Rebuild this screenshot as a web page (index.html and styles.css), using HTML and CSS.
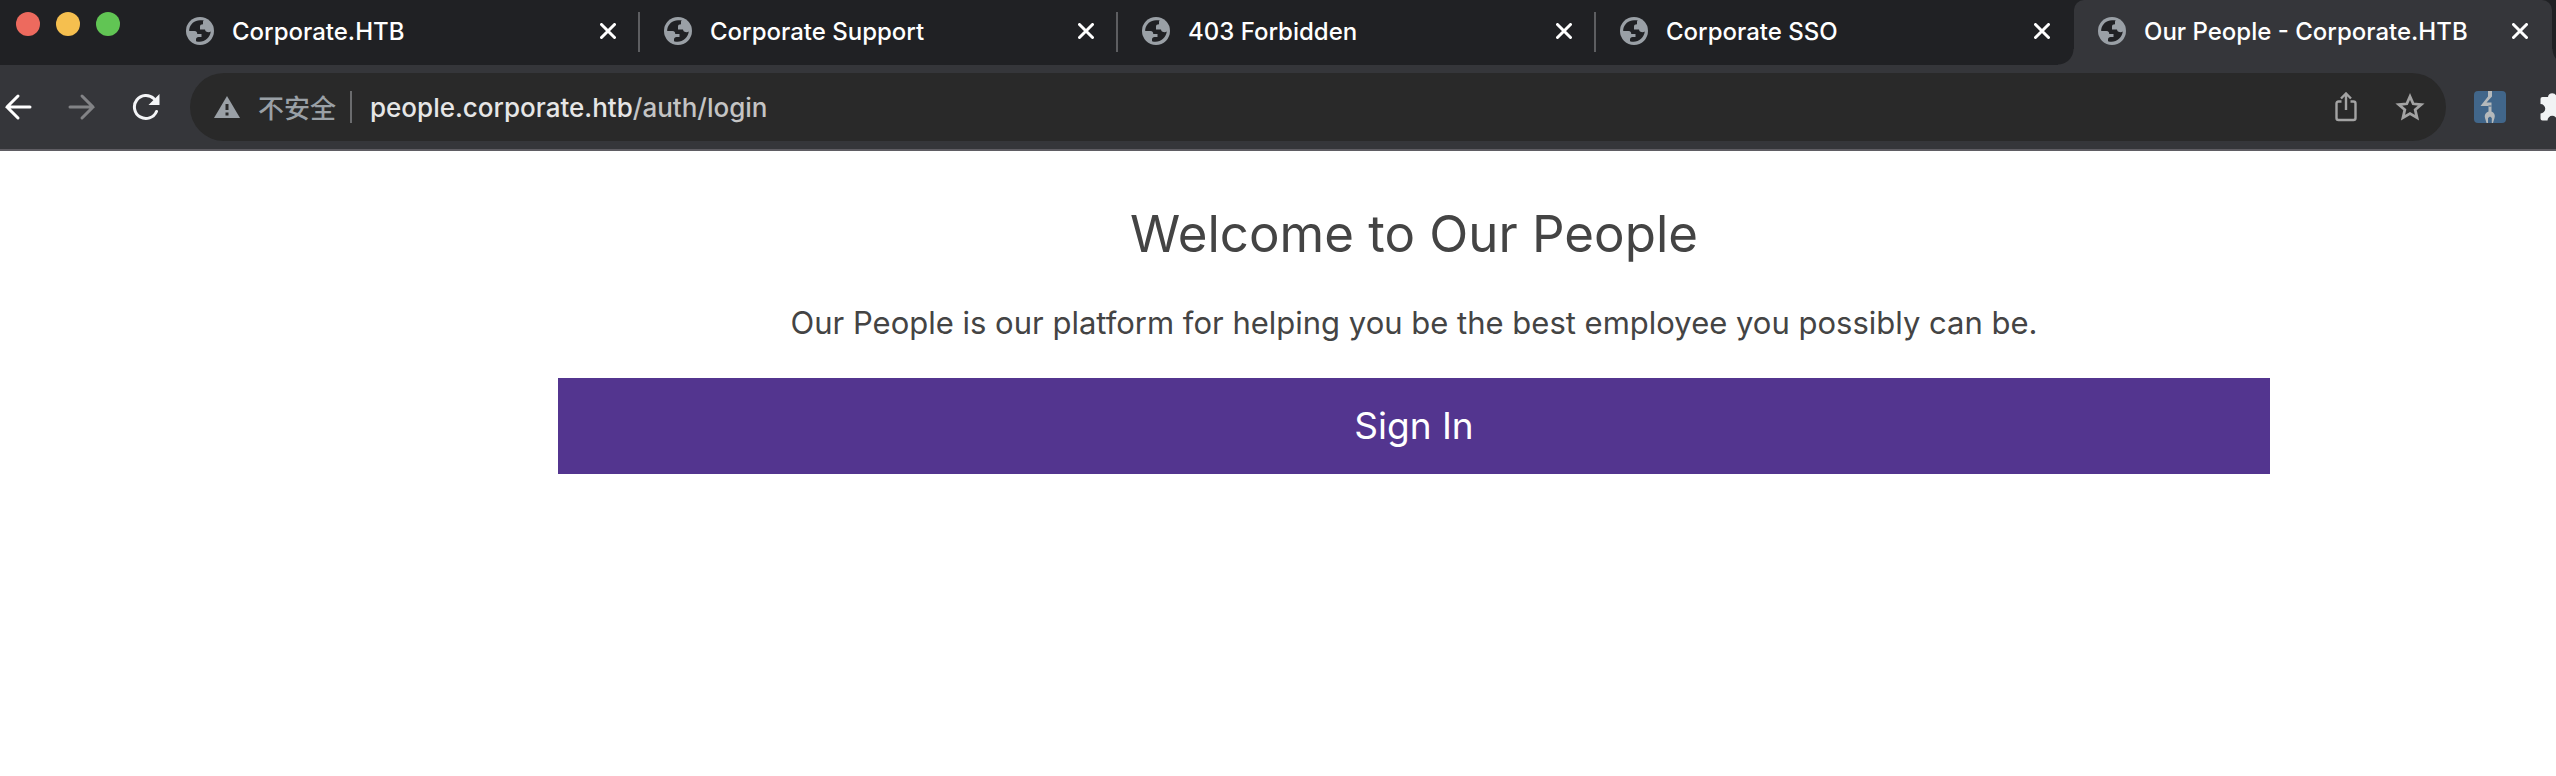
FILE: index.html
```html
<!DOCTYPE html>
<html lang="en">
<head>
<meta charset="utf-8">
<title>Our People - Corporate.HTB</title>
<link rel="stylesheet" href="styles.css">
</head>
<body>
<svg class="sprite" aria-hidden="true">
  <symbol id="globe" viewBox="0 0 28 28">
    <circle cx="14" cy="14" r="14" fill="#9aa0a6"/>
    <path class="sea" d="M14 3.2C8.500 3.300 4.200 7 3.200 12.500V14H8.500C10.500 14 11.500 15.500 11.200 17H15.500V20H12.500C11 20 10 21 10 22.500V24.200C17 26.500 24 21.500 24.800 14.500C23.500 15.600 21.500 15.400 20 14.500C19.300 13.800 19.300 13.500 19 12.500H14V9.500C14 8 15 7.500 17 7.300V5C17 4 17.500 3.700 17.800 3.500C16.500 3.200 15.300 3.100 14 3.200Z"/>
  </symbol>
  <symbol id="cross" viewBox="0 0 16 16">
    <path d="M1.500 1.500L14.500 14.500M14.500 1.500L1.500 14.500" fill="none" stroke="#fff" stroke-width="3" stroke-linecap="round"/>
  </symbol>
</svg>
<header class="browser">
  <div class="tabstrip">
    <div class="lights">
      <button class="light red" aria-label="Close window"></button>
      <button class="light yellow" aria-label="Minimize window"></button>
      <button class="light green" aria-label="Zoom window"></button>
    </div>
    <div class="tab"><svg class="globe"><use href="#globe"/></svg><span class="title">Corporate.HTB</span><button class="close" aria-label="Close Corporate.HTB"><svg><use href="#cross"/></svg></button></div>
    <div class="tab"><svg class="globe"><use href="#globe"/></svg><span class="title">Corporate Support</span><button class="close" aria-label="Close Corporate Support"><svg><use href="#cross"/></svg></button></div>
    <div class="tab"><svg class="globe"><use href="#globe"/></svg><span class="title">403 Forbidden</span><button class="close" aria-label="Close 403 Forbidden"><svg><use href="#cross"/></svg></button></div>
    <div class="tab last"><svg class="globe"><use href="#globe"/></svg><span class="title">Corporate SSO</span><button class="close" aria-label="Close Corporate SSO"><svg><use href="#cross"/></svg></button></div>
    <div class="tab active"><svg class="globe"><use href="#globe"/></svg><span class="title">Our People - Corporate.HTB</span><button class="close" aria-label="Close Our People"><svg><use href="#cross"/></svg></button></div>
  </div>
  <div class="toolbar">
    <nav class="nav">
      <button aria-label="Back"><svg viewBox="0 0 28 28"><path d="M26 14H3M14 3L3 14L14 25" fill="none" stroke="#fff" stroke-width="3" stroke-linecap="round"/></svg></button>
      <button aria-label="Forward"><svg viewBox="0 0 28 28"><path d="M2 14H25M14 3L25 14L14 25" fill="none" stroke="#828386" stroke-width="3" stroke-linecap="round"/></svg></button>
      <button aria-label="Reload"><svg viewBox="0 0 28 28"><path d="M24.500 18.500A11.500 11.500 0 1 1 22 5.800" fill="none" stroke="#f4f5f7" stroke-width="3" stroke-linecap="round"/><path d="M27.500 1V12H16.500Z" fill="#f4f5f7"/></svg></button>
    </nav>
    <div class="omnibox">
      <svg class="warn" viewBox="0 0 26 22"><path d="M13 0L26 22H0Z" fill="#9aa0a6"/><path d="M13 8V14M13 16.500V19.500" stroke="#292929" stroke-width="3"/></svg>
      <span class="insecure" lang="zh">不安全</span>
      <a class="url" href="#"><b>people.corporate.htb</b>/auth/login</a>
      <button class="share" aria-label="Share"><svg viewBox="0 0 22 30"><path d="M6.500 9.500H3.500Q1.500 9.500 1.500 11.500V26Q1.500 28 3.500 28H18.500Q20.500 28 20.500 26V11.500Q20.500 9.500 18.500 9.500H15.500M11 18V2M6 6.500L11 1.500L16 6.500" fill="none" stroke="#a3a3a3" stroke-width="2.400"/></svg></button>
      <button class="star" aria-label="Bookmark"><svg viewBox="0 0 30 28"><path d="M15 3.500L18.200 10.800L26.200 11.500L20.200 16.800L22 24.600L15 20.500L8 24.600L9.800 16.800L3.800 11.500L11.800 10.800Z" fill="none" stroke="#a3a3a3" stroke-width="2.800"/></svg></button>
    </div>
    <button class="ext" aria-label="Extension"><svg viewBox="0 0 32 32"><rect width="32" height="32" rx="4" fill="#41668a"/><path d="M14 0H18V5.500L12.500 11.500H17.500V20.500A5 5 0 0 1 20.500 27L19 32H17.800V27L16 25.500L14 27V32H12.500L11 27A5 5 0 0 1 14.500 20.500V15H6.500L14 5.500Z" fill="#b5b9bb"/><path d="M14.500 15H17.500" stroke="#41668a"/></svg></button>
    <button class="puzzle" aria-label="Extensions"><svg viewBox="0 0 32 30"><path d="M2.500 5H8A4.300 4.300 0 0 1 16.500 5H22Q24 5 24 7V12.500A4.300 4.300 0 0 1 24 21V26.500Q24 28.500 22 28.500H17A4.600 4.600 0 0 0 7.500 28.500H2.500Q.5 28.500 .5 26.500V21.500A4.600 4.600 0 0 0 .5 12V7Q.5 5 2.500 5Z" fill="#f1f3f4"/></svg></button>
  </div>
</header>
<main class="page">
  <h1>Welcome to Our People</h1>
  <p>Our People is our platform for helping you be the best employee you possibly can be.</p>
  <a class="signin" href="#">Sign In</a>
</main>
</body>
</html>
```
FILE: styles.css
```css
* { box-sizing: border-box; }
body {
  margin: 0;
  background: #fff;
  color: #444;
  font-family: Inter, "Noto Sans CJK SC", sans-serif;
  overflow-x: hidden;
}
button { padding: 0; border: 0; background: none; display: flex; flex: none; }
h1, p { margin: 0; font-weight: 400; }
.sprite { display: none; }
.browser { border-bottom: 2px solid #5f5d63; overflow: hidden; }

.tabstrip { display: flex; height: 65px; padding-right: 4px; background: #202124; }
.lights { display: flex; flex: none; gap: 16px; width: 162px; padding: 12px 0 0 16px; }
.light { width: 24px; height: 24px; border-radius: 50%; }
.red { background: #ed6a5e; }
.yellow { background: #f5bf4f; }
.green { background: #61c554; }
.tab {
  position: relative;
  display: flex;
  flex: 1 1 0;
  align-items: center;
  min-width: 0;
  padding: 0 24px;
  height: 62px;
  color: #fff;
  font-size: 24px;
  font-weight: 500;
}
.globe { flex: none; width: 28px; height: 28px; margin-right: 18px; }
.sea { fill: #202124; }
.title { flex: 1; white-space: nowrap; overflow: hidden; }
.close svg { width: 16px; height: 16px; }
.tab::after {
  content: "";
  position: absolute;
  right: 0;
  top: 12px;
  width: 2px;
  height: 40px;
  background: #5d5e61;
}
.tab.last::after { display: none; }
.tab.active { height: 65px; padding-bottom: 3px; background: #35363a; border-radius: 10px 10px 0 0; }
.tab.active::before, .tab.active::after {
  content: "";
  position: absolute;
  top: auto;
  bottom: 0;
  width: 16px;
  height: 16px;
}
.tab.active::before { left: -16px; background: radial-gradient(circle at 0 0, #202124 15px, #35363a 16px); }
.tab.active::after { right: -16px; background: radial-gradient(circle at 100% 0, #202124 15px, #35363a 16px); }

.toolbar {
  display: flex;
  align-items: center;
  height: 84px;
  background: #35363a;
}
.nav { display: flex; flex: none; gap: 36px; width: 190px; padding-left: 4px; }
.nav svg { width: 28px; height: 28px; }
.omnibox {
  display: flex;
  flex: 1;
  align-items: center;
  height: 68px;
  padding: 0 21px 0 24px;
  border-radius: 34px;
  background: #292929;
}
.warn { flex: none; width: 26px; height: 22px; }
.insecure {
  flex: none;
  margin-left: 18px;
  padding-right: 14px;
  border-right: 2px solid #6b6c6e;
  color: #9aa0a6;
  font: 500 26px/32px "Noto Sans CJK SC", sans-serif;
}
.url { flex: 1; margin-left: 18px; color: #c4c4c4; font-size: 26px; font-weight: 500; text-decoration: none; }
.url b { color: #e6e6e6; font-weight: 500; }
.share { margin-right: 38px; }
.share svg { width: 22px; height: 30px; }
.star svg { width: 30px; height: 28px; }
.ext { margin-left: 28px; }
.ext svg { width: 32px; height: 32px; }
.puzzle { width: 16px; margin-left: 34px; overflow: hidden; }
.puzzle svg { flex: none; width: 32px; height: 30px; }

.page { padding: 48px 286px 0 558px; text-align: center; }
h1 { font-size: 51px; line-height: 70px; }
.page p { margin-top: 32px; font-size: 31px; line-height: 44px; }
.signin {
  display: block;
  margin-top: 33px;
  background: #53358f;
  color: #fff;
  font-size: 37px;
  line-height: 96px;
  text-decoration: none;
}
```
